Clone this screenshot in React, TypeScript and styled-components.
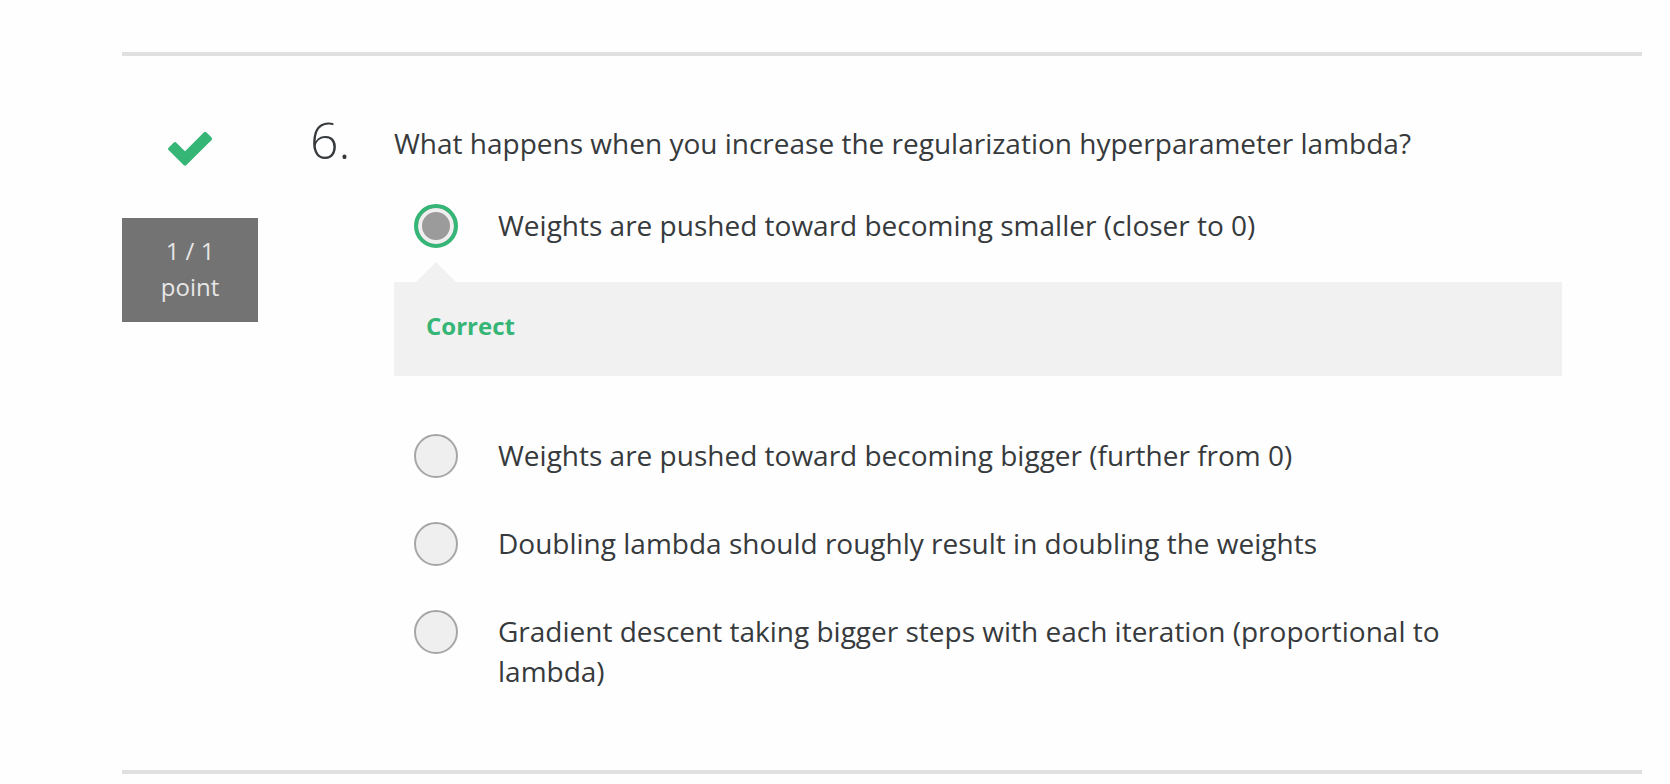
import React from "react";
import styled, { createGlobalStyle } from "styled-components";

const Global = createGlobalStyle`
  * { box-sizing: border-box; }
  body { margin: 0; background: #fefefe; color: #373a3c; font-family: "Open Sans", sans-serif; font-size: 28px; line-height: 40px; }
`;

const Page = styled.main`
  padding: 52px 28px 0 122px;
`;

const Question = styled.section`
  display: grid;
  grid-template-columns: 136px 1fr;
  column-gap: 52px;
  border-top: 4px solid #e0e0e0;
  border-bottom: 4px solid #e0e0e0;
  padding: 64px 80px 55px 0;
`;

const Status = styled.aside`
  display: flex;
  flex-direction: column;
  gap: 52px;
`;

const Check = styled.svg`
  width: 44px;
  height: 34px;
  margin: 12px auto 0;
  display: block;
`;

const Points = styled.p`
  margin: 0;
  padding: 15px 12px 17px;
  background: #737373;
  color: #e6e6e6;
  font-size: 24px;
  line-height: 36px;
  text-align: center;
  display: flex;
  flex-direction: column;
`;

const Body = styled.div`
  display: grid;
  grid-template-columns: 84px 1fr;
`;

const Number = styled.span`
  font-size: 50px;
  font-weight: 300;
`;

const Prompt = styled.h2`
  margin: 3px 0 21px;
  font-size: 28px;
  font-weight: 400;
  line-height: 40px;
`;

const Answers = styled.fieldset`
  grid-column: 2;
  border: 0;
  margin: 0;
  padding: 0;
  min-width: 0;
`;

const Option = styled.label`
  display: flex;
  align-items: flex-start;
  gap: 40px;
  padding: 20px 100px 24px 20px;
`;

const OptionText = styled.span`
  padding-top: 1px;
`;

const Radio = styled.input`
  appearance: none;
  flex: none;
  width: 44px;
  height: 44px;
  margin: 0;
  border: 2px solid #a6a6a6;
  border-radius: 50%;
  background: #efefef;
  &:checked {
    border: 4px solid #35b576;
    background: #9b9b9b;
    box-shadow: inset 0 0 0 4px #efefef;
  }
`;

const Feedback = styled.div`
  position: relative;
  margin: 10px 0 38px;
  padding: 26px 32px 32px;
  background: #f1f1f1;
  color: #35b576;
  font-size: 24px;
  font-weight: 700;
  line-height: 36px;
  &::before {
    content: "";
    position: absolute;
    left: 22px;
    bottom: 100%;
    border: 20px solid transparent;
    border-top: 0;
    border-bottom-color: #f1f1f1;
  }
`;

const options = [
  { text: "Weights are pushed toward becoming smaller (closer to 0)", correct: true },
  { text: "Weights are pushed toward becoming bigger (further from 0)" },
  { text: "Doubling lambda should roughly result in doubling the weights" },
  { text: "Gradient descent taking bigger steps with each iteration (proportional to lambda)" },
];

export default function App() {
  return (
    <Page>
      <Global />
      <Question>
        <Status>
          <Check viewBox="0 0 44 34" role="img" aria-label="Correct answer">
            <path
              d="M2.2 16.9 L7 12.1 L17 22.1 L37.15 1.95 L41.95 6.75 L17 31.7 Z"
              fill="#35b576"
              stroke="#35b576"
              strokeWidth="4"
              strokeLinejoin="round"
            />
          </Check>
          <Points><span>1 / 1</span><span>point</span></Points>
        </Status>
        <Body>
          <Number>6.</Number>
          <Prompt id="prompt">What happens when you increase the regularization hyperparameter lambda?</Prompt>
          <Answers aria-labelledby="prompt">
            {options.map((o) => (
              <React.Fragment key={o.text}>
                <Option>
                  <Radio type="radio" name="answer" defaultChecked={o.correct} />
                  <OptionText>{o.text}</OptionText>
                </Option>
                {o.correct && <Feedback>Correct</Feedback>}
              </React.Fragment>
            ))}
          </Answers>
        </Body>
      </Question>
    </Page>
  );
}
